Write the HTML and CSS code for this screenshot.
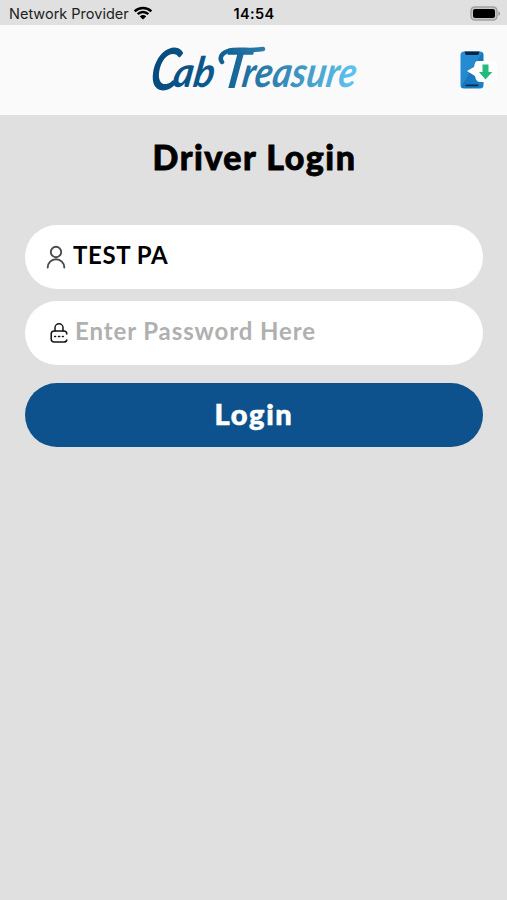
FILE: index.html
```
<!DOCTYPE html>
<html lang="en">
<head>
<meta charset="utf-8">
<meta name="viewport" content="width=device-width, initial-scale=1">
<title>Driver Login</title>
<link rel="stylesheet" href="styles.css">
</head>
<body>
<div class="status-bar">
  <div class="carrier">
    <span>Network Provider</span>
    <svg class="wifi" viewBox="0 0 20 14" aria-hidden="true">
      <path d="M1.700 5.300a11.800 11.800 0 0 1 16.600 0M4.700 8.200a7.600 7.600 0 0 1 10.600 0" fill="none" stroke="#000" stroke-width="2.500"/>
      <path d="M10 13.500 6.800 10.400a4.600 4.600 0 0 1 6.400 0z"/>
    </svg>
  </div>
  <span class="time">14:54</span>
  <svg class="battery" viewBox="0 0 31 15" aria-hidden="true">
    <rect x="1" y="1" width="26" height="13" rx="3.800" fill="#c8c8c8" stroke="#a0a0a0" stroke-width="1.400"/>
    <rect x="3" y="3" width="22" height="9" rx="2" fill="#000"/>
    <path d="M28.400 5.200c2.200.8 2.200 3.800 0 4.600z" fill="#999"/>
  </svg>
</div>
<header class="header">
  <svg class="logo" viewBox="0 0 210 56" role="img" aria-label="Cab Treasure">
    <defs>
      <linearGradient id="ink" gradientUnits="userSpaceOnUse" x1="0" y1="0" x2="210" y2="0">
        <stop offset="0" stop-color="#064a7d"/>
        <stop offset=".3" stop-color="#0c5a8e"/>
        <stop offset=".6" stop-color="#3284b1"/>
        <stop offset="1" stop-color="#63c8f4"/>
      </linearGradient>
    </defs>
    <g class="logo-text" fill="url(#ink)" transform="translate(7 0) skewX(-9)">
      <text class="cap" x="0" y="48" textLength="28" lengthAdjust="spacingAndGlyphs">C</text>
      <text class="low" x="23" y="45" textLength="41" lengthAdjust="spacingAndGlyphs">ab</text>
      <text class="tee" x="71" y="46" textLength="27" lengthAdjust="spacingAndGlyphs">T</text>
      <text class="low" x="92" y="45" textLength="114" lengthAdjust="spacingAndGlyphs">reasure</text>
    </g>
    <path d="M73 20c-4-6 2-11 11-12 10-1 18 1 30-1" fill="none" stroke="url(#ink)" stroke-width="4.500" stroke-linecap="round"/>
  </svg>
  <svg class="app-icon" viewBox="0 0 42 42" aria-hidden="true">
    <defs>
      <linearGradient id="screen" x1="0" y1="0" x2="1" y2="1">
        <stop offset="0" stop-color="#258fd6"/>
        <stop offset=".48" stop-color="#2488cf"/>
        <stop offset=".5" stop-color="#1676bd"/>
        <stop offset="1" stop-color="#1b80c7"/>
      </linearGradient>
    </defs>
    <rect x="4.500" y="2.500" width="23" height="37" rx="3.500" fill="url(#screen)"/>
    <path d="M8.500 2.500h15l-1.300 3.500H9.800z" fill="#062547"/>
    <rect x="9.500" y="35.500" width="13" height="1.800" rx=".9" fill="#0b2b4c"/>
    <path d="M21 12h14q6 0 6 6v9q0 6-6 6H24q-4 0-5-6l-8-5 7-4q1-6 3-6z" fill="#fff"/>
    <path d="M26.500 15.500h6V23h3.800L29.500 30.500 23 23h3.500z" fill="#23bb7b"/>
  </svg>
</header>
<main class="content">
  <h1 class="title">Driver Login</h1>
  <form class="form">
    <label class="field">
      <svg class="user-icon" viewBox="0 0 20 24" aria-hidden="true">
        <g fill="none" stroke="#4b4b4b" stroke-width="1.900" stroke-linecap="round">
          <circle cx="10" cy="7" r="5.200"/>
          <path d="M1.700 22.500a8.300 8.300 0 0 1 16.600 0"/>
        </g>
      </svg>
      <span class="value">TEST PA</span>
    </label>
    <label class="field">
      <svg class="lock-icon" viewBox="0 0 18 20" aria-hidden="true">
        <g fill="none" stroke="#161616" stroke-width="1.500" stroke-linecap="round">
          <path d="M5 8V4.800a4 4 0 0 1 8 0V8"/>
          <path d="M16.800 11c0-2.500-1-3-3-3H4.200c-2 0-3 .8-3 3v5c0 2.200 1 3 3 3h9.600c1.800 0 2.700-.6 3-2"/>
          <path d="M4.700 13.500h.9M8.500 13.500h1.200M12.400 13.500h.9"/>
        </g>
      </svg>
      <span class="placeholder">Enter Password Here</span>
    </label>
    <button class="login" type="button">Login</button>
  </form>
</main>
</body>
</html>
```
FILE: styles.css
```
* {
  box-sizing: border-box;
}

body {
  margin: 0;
  min-height: 100vh;
  background: #e0e0e0;
  color: #000;
  font-family: Lato, sans-serif;
}

.status-bar {
  display: grid;
  grid-template-columns: 1fr auto 1fr;
  align-items: center;
  height: 25px;
  padding: 2px 6px 0 9px;
  font: 14.5px/20px Inter, sans-serif;
}

.carrier {
  display: flex;
  align-items: center;
  gap: 4px;
  white-space: nowrap;
  color: #222;
}

.wifi {
  width: 20px;
  height: 14px;
  margin-bottom: 2px;
}

.time {
  margin-right: 2px;
  font-weight: 600;
  letter-spacing: 0.4px;
}

.battery {
  width: 31px;
  height: 15px;
  justify-self: end;
}

.header {
  display: grid;
  grid-template-columns: 1fr 210px 1fr;
  align-items: center;
  height: 90px;
  padding-right: 9px;
  padding-left: 9px;
  background: #fafafa;
}

.logo {
  grid-column: 2;
  width: 210px;
  height: 56px;
  overflow: visible;
}

.logo-text {
  font-family: Lato, sans-serif;
  font-style: italic;
  font-weight: 700;
}

.cap {
  font-size: 58px;
}

.tee {
  font-size: 54px;
}

.low {
  font-size: 42px;
}

.app-icon {
  width: 42px;
  height: 42px;
  justify-self: end;
}

.content {
  padding: 21px 24px 0 25px;
}

.title {
  margin: 0;
  padding-left: 1px;
  font-size: 34px;
  font-weight: 900;
  line-height: 42px;
  letter-spacing: 1.5px;
  text-align: center;
  -webkit-text-stroke: 0.8px;
}

.form {
  display: flex;
  flex-direction: column;
  margin-top: 47px;
}

.field {
  display: flex;
  align-items: center;
  height: 64px;
  margin-bottom: 12px;
  padding-left: 21px;
  border-radius: 32px;
  background: #fff;
  font-size: 24px;
  font-weight: 700;
  line-height: 30px;
}

.user-icon {
  width: 20px;
  height: 24px;
  margin-right: 7px;
}

.lock-icon {
  width: 18px;
  height: 20px;
  margin-right: 7px;
  margin-left: 4px;
}

.value,
.placeholder {
  margin-bottom: 4px;
}

.value {
  letter-spacing: 0.6px;
}

.placeholder {
  color: #b0b0b0;
  letter-spacing: 0.9px;
}

.login {
  height: 64px;
  margin-top: 6px;
  padding: 0 0 2px;
  border: 0;
  border-radius: 32px;
  background: #0d528c;
  color: #fff;
  font: 900 29px/36px Lato, sans-serif;
  letter-spacing: 1.7px;
  -webkit-text-stroke: 0.6px;
}
```
